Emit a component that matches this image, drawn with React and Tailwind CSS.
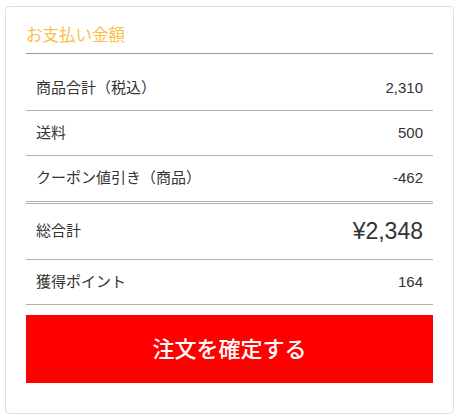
const rows = [
  { label: "送料", value: "500", cls: "h-[45px] border-b border-[#b3b3b3]" },
  { label: "クーポン値引き（商品）", value: "-462", cls: "h-[48px] border-b-[3px] border-double border-[#b3b3b3]" },
];

export default function App() {
  return (
    <div
      className="min-h-[418px] bg-white px-[5px] pt-[6px] text-[#333]"
      style={{ fontFamily: '"Liberation Sans", "Noto Sans CJK JP", sans-serif' }}
    >
      <div className="rounded-[4px] border border-[#e0e0e0] px-5 pt-4 pb-[30px]">
        <h2 className="border-b border-[#999] pb-[6px] text-[16.5px] leading-6 text-[#fcc04a]">
          お支払い金額
        </h2>
        <div className="mt-3 flex h-[45px] items-center justify-between border-b border-[#b3b3b3] px-[10px] text-[15px]">
          <span>商品合計（税込）</span>
          <span>2,310</span>
        </div>
        {rows.map((r) => (
          <div
            key={r.label}
            className={`flex items-center justify-between px-[10px] text-[15px] ${r.cls}`}
          >
            <span>{r.label}</span>
            <span>{r.value}</span>
          </div>
        ))}
        <div className="flex h-[56px] items-center justify-between border-b border-[#b3b3b3] px-[10px]">
          <span className="text-[15px]">総合計</span>
          <span className="text-[23px]">¥2,348</span>
        </div>
        <div className="flex h-[45px] items-center justify-between border-b border-[#b3b3b3] px-[10px] text-[15px]">
          <span>獲得ポイント</span>
          <span>164</span>
        </div>
        <button className="mt-[10px] flex h-[68px] w-full items-center justify-center bg-[#ff0000] text-[22px] font-medium text-white">
          注文を確定する
        </button>
      </div>
    </div>
  );
}
